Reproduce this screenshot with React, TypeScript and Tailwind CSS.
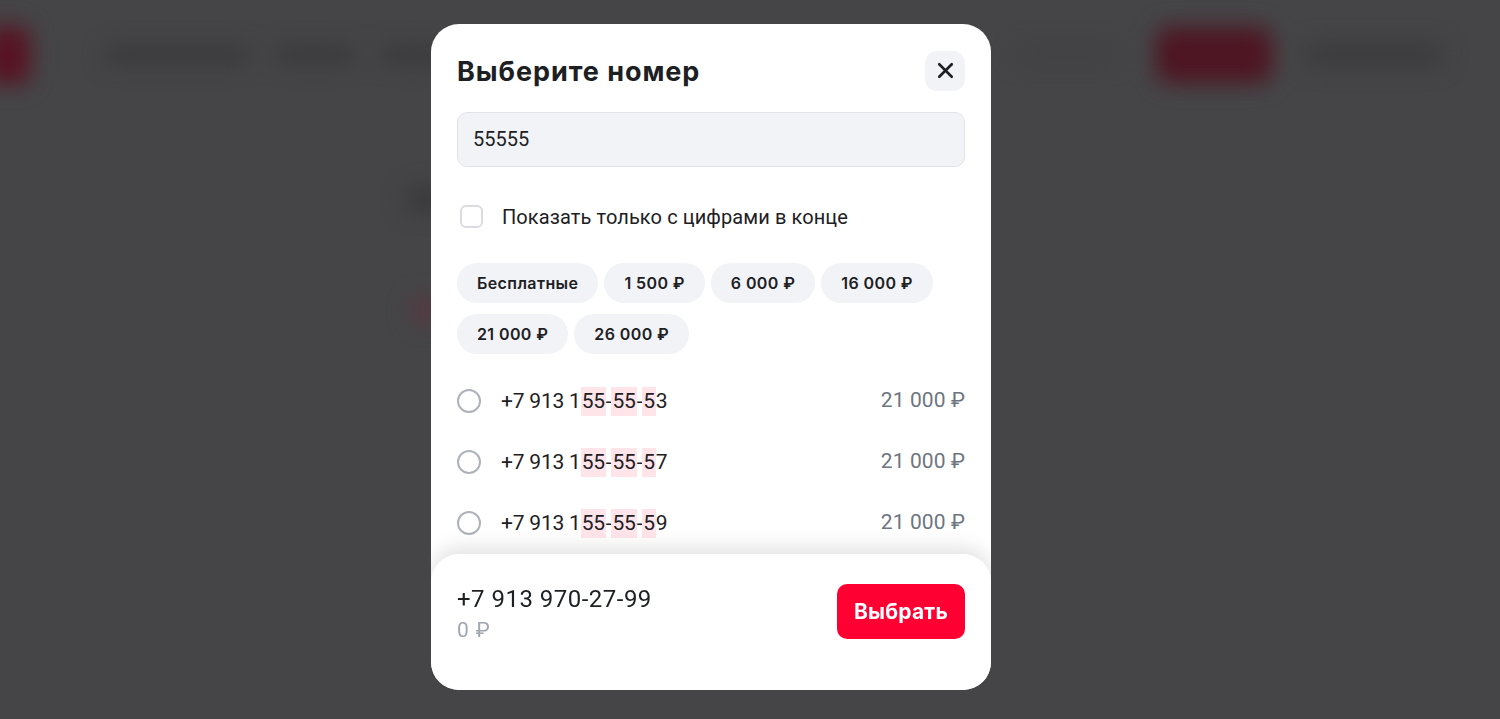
import { X } from 'lucide-react';

const chips = ['Бесплатные', '1 500 ₽', '6 000 ₽', '16 000 ₽', '21 000 ₽', '26 000 ₽'];

const numbers = [
  { tail: '3', price: '21 000 ₽' },
  { tail: '7', price: '21 000 ₽' },
  { tail: '9', price: '21 000 ₽' },
  { tail: '1', price: '21 000 ₽' },
];

function Mark({ children }: { children: React.ReactNode }) {
  return <span className="inline-block bg-[#ffe4e9] px-[1px] leading-[29px]">{children}</span>;
}

function NumberRow({ tail, price }: { tail: string; price: string }) {
  return (
    <label className="flex h-[61px] shrink-0 items-center">
      <span className="h-[24px] w-[24px] rounded-full border-2 border-[#aeb3ba]" />
      <span className="ml-[20px] text-[21px] leading-[29px] tracking-[-0.01em] text-[#1d2023]">
        +7 913 1<Mark>55</Mark>-<Mark>55</Mark>-<Mark>5</Mark>
        {tail}
      </span>
      <span className="ml-auto text-[21px] tracking-[0.005em] text-[#6e7580]">{price}</span>
    </label>
  );
}

function BackgroundPage() {
  return (
    <div className="pointer-events-none flex flex-col blur-[11px]">
      <div className="flex h-[110px] items-center">
        <div className="-ml-[14px] h-[58px] w-[44px] rounded-[12px] bg-[#581222]" />
        <div className="ml-[76px] flex items-center gap-[28px]">
          <div className="h-[16px] w-[142px] rounded bg-[#38383a]" />
          <div className="h-[16px] w-[78px] rounded bg-[#38383a]" />
          <div className="h-[16px] w-[60px] rounded bg-[#38383a]" />
        </div>
        <div className="ml-auto flex items-center">
          <div className="h-[14px] w-[100px] rounded bg-[#414143]" />
          <div className="ml-[40px] h-[56px] w-[116px] rounded-[14px] bg-[#4e1522]" />
          <div className="ml-[34px] mr-[58px] h-[22px] w-[136px] rounded bg-[#3b3b3d]" />
        </div>
      </div>
      <div className="ml-[408px] mt-[78px] h-[22px] w-[60px] rounded bg-[#38383a]" />
      <div className="ml-[412px] mt-[88px] h-[24px] w-[30px] rounded bg-[#573840]" />
    </div>
  );
}

export default function App() {
  return (
    <div className="relative h-screen w-full overflow-hidden bg-[#454547] font-['Roboto',sans-serif]">
      <BackgroundPage />

      <div className="fixed inset-0 flex justify-center pr-[78px] pt-[24px]">
        <div className="flex h-[666px] w-[560px] flex-col overflow-hidden rounded-[28px] bg-white">
          <div className="flex min-h-0 flex-1 flex-col overflow-hidden px-[26px] pt-[25px]">
            <div className="flex items-center justify-between">
              <h2 className="pt-[3px] font-['Inter',sans-serif] text-[27px] font-bold tracking-[0.035em] text-[#1d2023]">
                Выберите номер
              </h2>
              <button className="flex h-[40px] w-[40px] items-center justify-center rounded-[12px] bg-[#f2f3f7] text-[#1d2023]">
                <X size={25} strokeWidth={2.5} />
              </button>
            </div>

            <div className="mt-[19px] flex h-[55px] shrink-0 items-center rounded-[10px] border border-[#e2e3ea] bg-[#f2f3f7] px-[15px] text-[20px] text-[#1d2023]">
              55555
            </div>

            <div className="mt-[35px] flex shrink-0 items-center">
              <span className="ml-[3px] h-[23px] w-[23px] rounded-[6px] border-2 border-[#dadce2]" />
              <span className="ml-[19px] text-[20px] tracking-[0.005em] text-[#1d2023]">
                Показать только с цифрами в конце
              </span>
            </div>

            <div className="mt-[31px] flex shrink-0 flex-wrap gap-x-[6px] gap-y-[11px]">
              {chips.map((c) => (
                <span
                  key={c}
                  className="flex h-[40px] items-center rounded-full bg-[#f2f3f7] px-[20px] font-['Inter',sans-serif] text-[16px] font-semibold tracking-[0.025em] text-[#1d2023]"
                >
                  {c}
                </span>
              ))}
            </div>

            <div className="mt-[17px] flex flex-col">
              {numbers.map((n) => (
                <NumberRow key={n.tail} tail={n.tail} price={n.price} />
              ))}
            </div>
          </div>

          <div className="flex shrink-0 items-start justify-between rounded-t-[28px] bg-white px-[26px] pb-[48px] pt-[30px] shadow-[0_-6px_20px_rgba(0,0,0,0.12)]">
            <div className="flex flex-col">
              <span className="text-[24px] leading-[30px] tracking-[0.02em] text-[#1d2023]">+7 913 970-27-99</span>
              <span className="mt-[4px] text-[21px] leading-[24px] tracking-[0.04em] text-[#a1a7b0]">0 ₽</span>
            </div>
            <button className="h-[55px] w-[128px] rounded-[10px] bg-[#ff0032] font-['Inter',sans-serif] text-[21px] font-bold tracking-[0.01em] text-white">
              Выбрать
            </button>
          </div>
        </div>
      </div>
    </div>
  );
}
